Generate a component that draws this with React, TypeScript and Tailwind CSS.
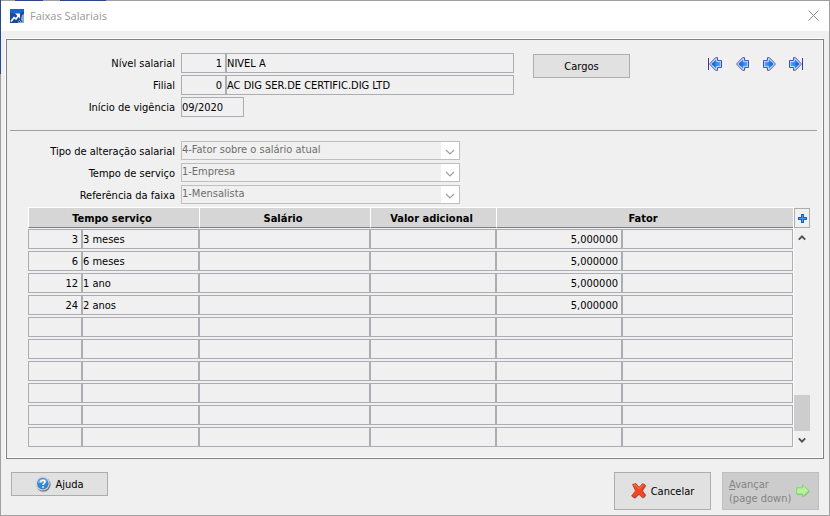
import React from 'react';

const RANGES = [
  { months: '3', label: '3 meses', factor: '5,000000' },
  { months: '6', label: '6 meses', factor: '5,000000' },
  { months: '12', label: '1 ano', factor: '5,000000' },
  { months: '24', label: '2 anos', factor: '5,000000' },
];

const ROW_COUNT = 10;

const OPTIONS = [
  { id: 'tipo', label: 'Tipo de alteração salarial', value: '4-Fator sobre o salário atual' },
  { id: 'tempo', label: 'Tempo de serviço', value: '1-Empresa' },
  { id: 'referencia', label: 'Referência da faixa', value: '1-Mensalista' },
];

const LABEL = 'mr-1.5 w-[168px] pt-0.5 text-right';
const FIELD = 'block h-5 border border-[#abadb3] bg-transparent text-black outline-none';
const BUTTON = 'flex w-[97px] shrink-0 items-center justify-center border border-[#adadad] bg-[#e1e1e1]';

const AppIcon = () => (
  <svg className="h-[14px] w-[14px]" viewBox="0 0 14 14">
    <rect width="14" height="14" fill="#174a9c" />
    <path d="M0 0h14v3L7 5 0 4z" fill="#1a63cf" />
    <path d="M8 14l1-3 2-1 1-4 2-1v9z" fill="#8aa9d8" />
    <path d="M1 12.5L4 8.5 6 10 9.5 5.5" fill="none" stroke="#fff" strokeWidth="1.6" />
    <path d="M5 4.5h5v5z" fill="#fff" />
    <path d="M9 13l2-2M10 10l2 3" stroke="#123b85" />
  </svg>
);

const NavIcon: React.FC<{ right?: boolean; bar?: boolean }> = ({ right, bar }) => (
  <svg className="h-[14px] w-[14px]" viewBox="0 0 14 14">
    <defs>
      <linearGradient id={right ? 'navRight' : 'navLeft'}>
        <stop offset="0" stopColor="#0a50d0" />
        <stop offset="1" stopColor="#52b0ff" />
      </linearGradient>
    </defs>
    <g transform={right ? `translate(${bar ? 14 : 15} 0) scale(-1 1)` : undefined}>
      {bar && <path d="M.5 1v12" stroke="#3a35a0" />}
      <path d="M2 6.5L7.5 .7H9.5V3.5H13.5V10.5H9.5V13.3H7.5L2 7.5z" fill="#c3dcfa" stroke="#4a50b0" />
      <path d="M3.4 7L8.2 2.6V5H12.4V9H8.2V11.4z" fill={right ? 'url(#navRight)' : 'url(#navLeft)'} />
    </g>
  </svg>
);

const HelpIcon = () => (
  <svg className="h-4 w-4" viewBox="0 0 16 16">
    <circle cx="8.4" cy="8.6" r="7.2" fill="#777" />
    <circle cx="7.6" cy="7.4" r="7.1" fill="#d4d6d8" />
    <circle cx="7.8" cy="7.6" r="5.8" fill="#3485d8" />
    <path d="M2.6 7a5.2 5.2 0 0110-1C9 5 6 8 2.6 7z" fill="#6eaeea" />
    <path d="M5.8 6.2c0-2.6 4.2-2.4 4.2-.2 0 1.5-2 1.3-2 3M8 10.2v1.6" fill="none" stroke="#fff" strokeWidth="1.6" />
  </svg>
);

const CancelIcon = () => (
  <svg className="h-4 w-4" viewBox="0 0 16 16">
    <path d="M3 2l2-.6L8.8 5 12.6 1.6 15.4 3 11.8 8l3.4 4.6-2.2 2.8L8.6 11.6 4.4 15.6 1.6 14 5.6 8.6z" fill="#8a8a8a" />
    <path d="M1.6 1.4L5 .6 8 4.2 11.8.6l2.6 1.6L11.2 7.4l3.2 4.8-2.8 2.6L7.8 11.2 3.6 15 .6 13 4.6 7.8z" fill="#f04a24" stroke="#c42a10" strokeWidth=".8" />
    <path d="M2.6 2.2l1.8-.4L8 5.6l4-4" fill="none" stroke="#ff8c66" strokeWidth=".9" />
  </svg>
);

const NextIcon = () => (
  <svg className="h-[14px] w-[14px]" viewBox="0 0 14 14">
    <path d="M1 5h6.4V1.4L13.8 7.4 7.4 13.6V11H1z" fill="#a4a4a4" />
    <path d="M.6 3.8H6.6V.8L13 6.8 6.6 12.8V10H.6z" fill="#b5f29a" stroke="#7ed36a" strokeWidth=".9" />
  </svg>
);

const Chevron: React.FC<{ className: string; up?: boolean; width?: number }> = ({ className, up, width = 1.2 }) => (
  <svg className={className} viewBox="0 0 10 6">
    <path d={up ? 'M1 5l4-4 4 4' : 'M1 1l4 4 4-4'} fill="none" stroke="currentColor" strokeWidth={width} />
  </svg>
);

const TitleBar = () => (
  <header className="flex h-[30px] items-center bg-white pr-2.5 pb-px pl-[9px]">
    <AppIcon />
    <h1 className="ml-1.5 font-['Open_Sans',sans-serif] text-[11px] text-[#999]">Faixas Salariais</h1>
    <button type="button" aria-label="Fechar" className="ml-auto">
      <svg className="h-[11px] w-[11px]" viewBox="0 0 11 11">
        <path d="M.5 .5l10 10M10.5 .5l-10 10" stroke="#8c8c8c" />
      </svg>
    </button>
  </header>
);

const HeaderForm = () => (
  <div className="flex items-start pt-[13px]">
    <div className="flex flex-col gap-0.5">
      <div className="flex items-center">
        <label htmlFor="nivel" className={LABEL}>Nível salarial</label>
        <input id="nivel" readOnly defaultValue="1" className={`${FIELD} w-[45px] pr-[3px] text-right`} />
        <input aria-label="Descrição do nível" readOnly defaultValue="NIVEL A" className={`${FIELD} w-[288px]`} />
      </div>
      <div className="flex items-center">
        <label htmlFor="filial" className={LABEL}>Filial</label>
        <input id="filial" readOnly defaultValue="0" className={`${FIELD} w-[45px] pr-[3px] text-right`} />
        <input aria-label="Nome da filial" readOnly defaultValue="AC DIG SER.DE CERTIFIC.DIG LTD" className={`${FIELD} w-[288px]`} />
      </div>
      <div className="flex items-center">
        <label htmlFor="vigencia" className={LABEL}>Início de vigência</label>
        <input id="vigencia" readOnly defaultValue="09/2020" className={`${FIELD} w-[63px]`} />
      </div>
    </div>
    <button type="button" className={`${BUTTON} mt-px ml-[19px] h-6`}>
      <span className="pt-0.5">Cargos</span>
    </button>
    <nav className="mt-1 mr-5 ml-auto flex gap-[13px]">
      <button type="button" aria-label="Primeiro"><NavIcon bar /></button>
      <button type="button" aria-label="Anterior"><NavIcon /></button>
      <button type="button" aria-label="Próximo"><NavIcon right /></button>
      <button type="button" aria-label="Último"><NavIcon right bar /></button>
    </nav>
  </div>
);

const OptionsForm = () => (
  <div className="flex flex-col gap-[3px]">
    {OPTIONS.map((option) => (
      <div key={option.id} className="flex items-center">
        <label htmlFor={option.id} className={LABEL}>{option.label}</label>
        <div className="relative">
          <select id={option.id} disabled className="block h-[19px] w-[279px] appearance-none border border-[#bfbfbf] bg-transparent pb-0.5 text-[#6d6d6d] opacity-100">
            <option>{option.value}</option>
          </select>
          <span className="pointer-events-none absolute inset-y-px right-px flex w-[18px] items-center justify-center bg-white pt-0.5 text-[#a0a0a0]">
            <Chevron className="h-[6px] w-[10px]" />
          </span>
        </div>
      </div>
    ))}
  </div>
);

const Cell: React.FC<{ name: string; value?: string; right?: boolean }> = ({ name, value = '', right }) => (
  <td className="py-px">
    <input aria-label={name} readOnly defaultValue={value} className={`${FIELD} w-full ${right ? 'pr-[3px] text-right' : ''}`} />
  </td>
);

const RangeTable = () => {
  const th = 'h-[21px] border-t border-l border-t-white border-l-white border-b border-b-[#808080] bg-[#d6d6d6] pt-0.5 pr-1 font-bold';
  return (
    <div className="mt-[3px] mr-[13px] ml-[21px] flex">
      <table className="w-full table-fixed border-separate border-spacing-0">
        <colgroup>
          <col className="w-[54px]" />
          <col className="w-[117px]" />
          <col className="w-[171px]" />
          <col className="w-[126px]" />
          <col className="w-[126px]" />
          <col />
        </colgroup>
        <thead>
          <tr>
            <th colSpan={2} className={th}>Tempo serviço</th>
            <th className={th}>Salário</th>
            <th className={th}>Valor adicional</th>
            <th colSpan={2} className={th}>Fator</th>
          </tr>
        </thead>
        <tbody>
          {Array.from({ length: ROW_COUNT }, (_, i) => (
            <tr key={i}>
              <Cell name="Meses" value={RANGES[i]?.months} right />
              <Cell name="Tempo serviço" value={RANGES[i]?.label} />
              <Cell name="Salário" />
              <Cell name="Valor adicional" />
              <Cell name="Fator" value={RANGES[i]?.factor} right />
              <Cell name="Descrição do fator" />
            </tr>
          ))}
        </tbody>
      </table>
      <div className="flex w-[17px] shrink-0 flex-col border-l border-white">
        <button type="button" aria-label="Adicionar" className="mt-px flex h-5 w-4 items-center justify-center border border-[#adadad]">
          <svg className="h-[9px] w-[9px]" viewBox="0 0 9 9">
            <path d="M3 0h3v3h3v3H6v3H3V6H0V3h3z" fill="#1c5fb4" />
            <path d="M4 1h1v3h3v1H5v3H4V5H1V4h3z" fill="#39a0f4" />
          </svg>
        </button>
        <button type="button" aria-label="Rolar para cima" className="flex h-5 items-center justify-center text-[#505050]">
          <Chevron className="h-[6px] w-2" up width={2.4} />
        </button>
        <div className="mt-auto h-9 bg-[#cdcdcd]" />
        <button type="button" aria-label="Rolar para baixo" className="flex h-[17px] items-center justify-center text-[#505050]">
          <Chevron className="h-[6px] w-2" width={2.4} />
        </button>
      </div>
    </div>
  );
};

const App: React.FC = () => {
  return (
    <div className="relative flex min-h-screen flex-col border border-[#a0a0a0] bg-[#f0f0f0] font-['DejaVu_Sans_Condensed','Noto_Sans',sans-serif] text-[11px] leading-[14px] text-black">
      {/* desktop showing through along the window's edge */}
      <span className="absolute -top-px -left-px h-[74px] w-px bg-[#2b468c]" />
      <span className="absolute -top-px left-3.5 h-px w-7 bg-[#2b468c]" />
      <span className="absolute -top-px left-[59px] h-px w-[46px] bg-[#2b468c]" />
      <TitleBar />
      <main className="mx-[5px] mt-2 border border-[#808080] pb-[10px] shadow-[-1px_-1px_0_0_#fff,inset_-1px_-1px_0_0_#fff]">
        <HeaderForm />
        <hr className="mr-1.5 ml-[3px] mt-[13px] mb-2.5 border-[#a0a0a0]" />
        <OptionsForm />
        <RangeTable />
      </main>
      <footer className="flex items-start gap-[11px] px-2.5 pt-[13px] pb-[5px]">
        <button type="button" className={`${BUTTON} mr-auto h-6 gap-1`}>
          <HelpIcon />
          <span className="pt-0.5">A<u>j</u>uda</span>
        </button>
        <button type="button" className={`${BUTTON} h-[38px] gap-1`}>
          <CancelIcon />
          <span className="pt-0.5">Cancelar</span>
        </button>
        <button type="button" disabled className="flex h-[38px] w-[97px] items-center justify-between border border-[#bfbfbf] bg-[#cccccc] pr-2 pl-1.5 text-left text-[#838383]">
          <span className="pt-0.5 whitespace-nowrap"><u>A</u>vançar<br />(page down)</span>
          <NextIcon />
        </button>
      </footer>
    </div>
  );
};

export default App;
